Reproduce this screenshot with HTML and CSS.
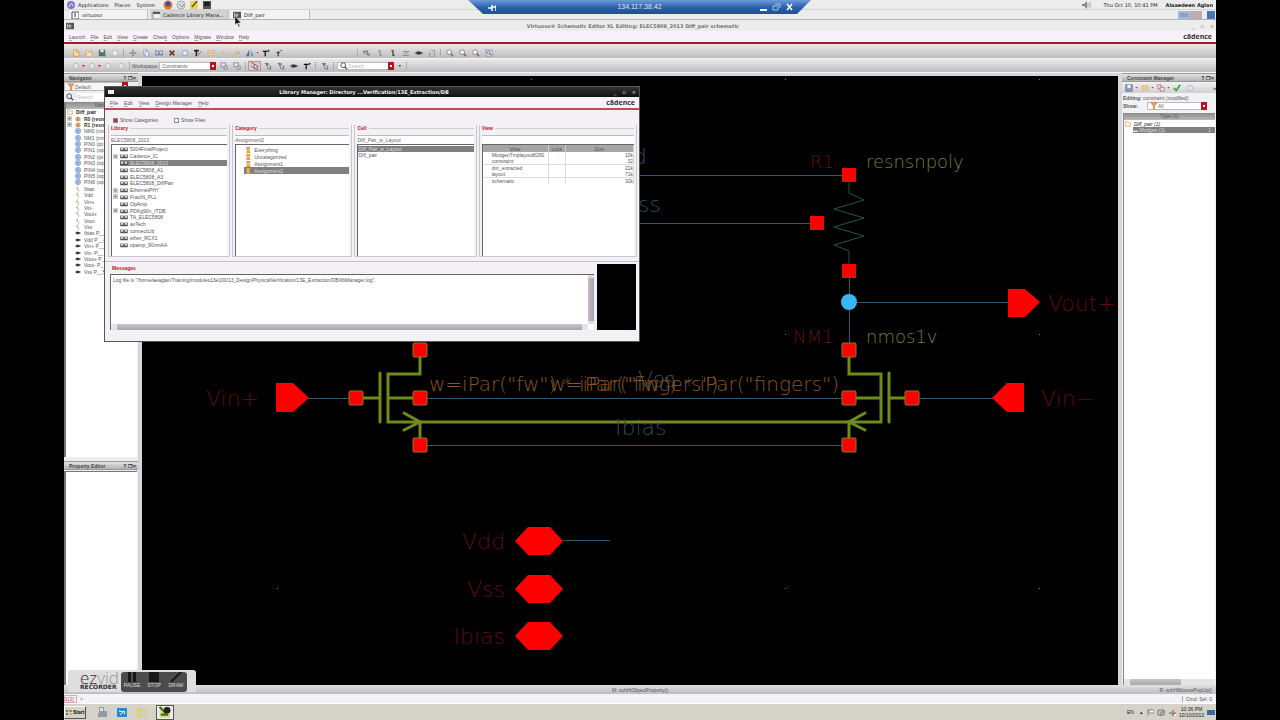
FILE: index.html
```html
<!DOCTYPE html>
<html lang="en">
<head>
    <meta charset="utf-8">
    <title>Virtuoso Schematic Editor</title>
    <link rel="stylesheet" href="styles.css">
</head>
<body>
    <!-- icon sheet -->
    <svg class="sheet" aria-hidden="true">
        <symbol id="i-new" viewBox="0 0 10 10"><path d="M2 1h4l3 3v5H2z" fill="#f7dca6" stroke="#d9964a"/><path d="M6 1v3h3" fill="none" stroke="#d9964a"/></symbol>
        <symbol id="i-open" viewBox="0 0 10 10"><path d="M1 9V2h3l1 1h4v2" fill="#fbe3c0" stroke="#dca064"/><path d="M1 9l2-4h7L8 9z" fill="#fdf0d8" stroke="#dca064"/></symbol>
        <symbol id="i-save" viewBox="0 0 10 10"><path d="M1 1h8v8H1z" fill="#53705c"/><path d="M3 1h4v3H3z" fill="#e6ece8"/><path d="M6 6l4 0-2 4z" fill="#2b9a47"/></symbol>
        <symbol id="i-page" viewBox="0 0 10 10"><path d="M2 2h6v6H2z" fill="#eee" stroke="#bbb"/></symbol>
        <symbol id="i-move" viewBox="0 0 10 10"><path d="M5 1v8M1 5h8M4 2l1-1 1 1M4 8l1 1 1-1M2 4L1 5l1 1M8 4l1 1-1 1" fill="none" stroke="#67788f"/></symbol>
        <symbol id="i-copy" viewBox="0 0 10 10"><path d="M2 1h4v6H2z" fill="#eef" stroke="#8f9bb0"/><path d="M4 3h4v6H4z" fill="#f6f6ff" stroke="#8f9bb0"/></symbol>
        <symbol id="i-book" viewBox="0 0 10 10"><path d="M0 2h4l1 1 1-1h4v6H0z" fill="#7188b8"/><path d="M1 3h3v3H1zM6 3h3v3H6z" fill="#d4dcf0"/></symbol>
        <symbol id="i-x" viewBox="0 0 10 10"><path d="M2 2l6 6M8 2L2 8" stroke="#743a30" stroke-width="2"/></symbol>
        <symbol id="i-ring" viewBox="0 0 10 10"><circle cx="5" cy="5" r="3.5" fill="#dfe8fa" stroke="#7b93cc"/></symbol>
        <symbol id="i-dim" viewBox="0 0 10 10"><circle cx="5" cy="5" r="3.5" fill="#e4e4ea" stroke="#b3b3bb"/></symbol>
        <symbol id="i-text" viewBox="0 0 10 10"><path d="M0 2h6M3 2v7" stroke="#222" stroke-width="2" fill="none"/><path d="M5 8l4-5" stroke="#c98a3c" stroke-width="1.5"/></symbol>
        <symbol id="i-tan" viewBox="0 0 10 10"><path d="M1 2h8v2H1zM1 6h8v2H1z" fill="#f6dcb4" stroke="#d8a25c" stroke-width=".7"/></symbol>
        <symbol id="i-undo" viewBox="0 0 10 10"><path d="M4 2L2 5l3 1M2 5c4-2 6 0 5 3" fill="none" stroke="#dfb788"/></symbol>
        <symbol id="i-redo" viewBox="0 0 10 10"><path d="M6 2l2 3-3 1M8 5C4 3 2 5 3 8" fill="none" stroke="#dc9a4c"/></symbol>
        <symbol id="i-tri" viewBox="0 0 10 10"><path d="M4 1v8H0z" fill="#4c6a98"/><path d="M6 1v8h4z" fill="#7f97bd"/></symbol>
        <symbol id="i-big" viewBox="0 0 10 10"><path d="M1 3h6M4 3v6" stroke="#111" stroke-width="1.6" fill="none"/><path d="M8 1v3M7 2h3" stroke="#444"/></symbol>
        <symbol id="i-small" viewBox="0 0 10 10"><path d="M2 4h4M4 4v5" stroke="#222" stroke-width="1.3" fill="none"/><path d="M6 2h3" stroke="#555"/></symbol>
        <symbol id="i-net" viewBox="0 0 10 10"><path d="M0 3h5v4h3M0 5h3" fill="none" stroke="#555"/><circle cx="5" cy="3" r="1.4" fill="#4a5"/><path d="M6 5h3v4H6z" fill="#999"/></symbol>
        <symbol id="i-wire" viewBox="0 0 10 10"><path d="M3 2h2v6h2" fill="none" stroke="#6b6b6b"/></symbol>
        <symbol id="i-wide" viewBox="0 0 10 10"><path d="M3 2h2v6h2" fill="none" stroke="#5b3b2b" stroke-width="1.6"/></symbol>
        <symbol id="i-label" viewBox="0 0 10 10"><path d="M1 8h8M1 3h8M3 5h4" stroke="#857b6b"/></symbol>
        <symbol id="i-pin" viewBox="0 0 10 10"><path d="M0 5h10" stroke="#333"/><path d="M2 3h4l3 2-3 2H2z" fill="#333"/></symbol>
        <symbol id="i-note" viewBox="0 0 10 10"><path d="M3 2h5v7H2V4" fill="#ddd" stroke="#888"/><path d="M3 6h4" stroke="#888"/></symbol>
        <symbol id="i-zoom" viewBox="0 0 10 10"><circle cx="4" cy="4" r="3" fill="#f5f7fa" stroke="#777"/><path d="M6 6l3 3" stroke="#a5502f" stroke-width="1.6"/></symbol>
        <symbol id="i-fit" viewBox="0 0 10 10"><path d="M1 1h8v8H1z" fill="#dfe3ee" stroke="#6f7893" stroke-dasharray="2 1"/><circle cx="4.500" cy="4.500" r="2" fill="none" stroke="#55607c"/><path d="M6 6l2 2" stroke="#333"/></symbol>
        <symbol id="i-win" viewBox="0 0 10 10"><path d="M1 1h6v5H1z" fill="#dde2ea" stroke="#7d8794"/><path d="M5 5h4v4H5z" fill="#c8ced8" stroke="#7d8794"/></symbol>
        <symbol id="i-arrow" viewBox="0 0 10 10"><path d="M1 2h5M3 1v4" stroke="#666" fill="none"/><path d="M4 3l5 3-2 .6L8.500 9 7 9.300 6 7.400 4.500 8z" fill="#fff" stroke="#333" stroke-width=".7"/></symbol>
        <symbol id="i-pick" viewBox="0 0 10 10"><path d="M0 0l9 6M0 5l6 4" stroke="#c0323c"/><path d="M4 3l5 3-2 .6L8.500 9 7 9.300 6 7.400 4.500 8z" fill="#fff" stroke="#333" stroke-width=".7"/></symbol>
        <symbol id="i-funnel" viewBox="0 0 10 10"><path d="M1 1h8L6 5v4H4V5z" fill="#e0a565" stroke="#b77b3e" stroke-width=".6"/></symbol>
        <symbol id="i-lens" viewBox="0 0 10 10"><circle cx="4" cy="4" r="3" fill="none" stroke="#333"/><path d="M6 6l3 3" stroke="#333" stroke-width="1.500"/></symbol>
        <symbol id="i-lib" viewBox="0 0 10 8"><path d="M0 2h4l1 1 1-1h4v5H0z" fill="#555"/><path d="M1 2h3v3H1zM6 2h3v3H6z" fill="#d8d8d8"/></symbol>
        <symbol id="i-cat" viewBox="0 0 10 10"><path d="M2 0h7v2H8v6h1v2H2V8h1V5H2V3h1V2H2z" fill="#dca04a"/><path d="M4 3h2v4H4z" fill="#f2cf8c"/></symbol>
        <symbol id="i-fold" viewBox="0 0 10 10"><path d="M1 9V1h3l1 2h4v6z" fill="#fff3dc" stroke="#d29b55"/></symbol>
        <symbol id="i-res" viewBox="0 0 10 10"><path d="M1 2l4-1 4 1v6L5 9 1 8z" fill="#d9a878"/><path d="M5 3v6" stroke="#a7683a"/></symbol>
        <symbol id="i-inst" viewBox="0 0 10 10"><circle cx="5" cy="5" r="4.500" fill="#b4c6ee" stroke="#7690cc"/><path d="M3 3h4v4H3z" fill="#8ba4db"/></symbol>
        <symbol id="i-sig" viewBox="0 0 10 10"><path d="M4 0v6h2v4M1 4h3" fill="none" stroke="#98a06c"/></symbol>
        <symbol id="i-term" viewBox="0 0 10 10"><path d="M0 5h10" stroke="#444"/><path d="M2 3h4l3 2-3 2H2z" fill="#333"/></symbol>
        <symbol id="i-app" viewBox="0 0 10 10"><path d="M0 1h10v8H0z" fill="#555"/><path d="M2 2v6M2 5h5M5 3v5" stroke="#ddd" fill="none"/></symbol>
        <symbol id="i-check" viewBox="0 0 10 10"><path d="M1 5l3 3 5-7" fill="none" stroke="#25a53a" stroke-width="2"/></symbol>
        <symbol id="i-disk" viewBox="0 0 10 10"><path d="M1 1h8v8H1z" fill="#8f9dc0" stroke="#5f6f98"/><path d="M3 1h4v4H3z" fill="#f0f3fa"/></symbol>
        <symbol id="i-cube" viewBox="0 0 10 10"><path d="M0 1h5v5H0z" fill="#ecd5dc" stroke="#a86f80"/><path d="M4 4h5v5H4z" fill="#f3e4e8" stroke="#a86f80"/></symbol>
    </svg>

    <main class="screen">
        <header class="panel">
            <svg class="icon big"><circle cx="5" cy="5" r="4" fill="#8274cf"/><path d="M3 7c1-4 4-4 4-1" stroke="#fff" fill="none"/></svg>
            <nav class="panel-menu"><a href="#">Applications</a><a href="#">Places</a><a href="#">System</a></nav>
            <div class="launchers">
                <svg class="icon big"><circle cx="5" cy="5" r="4.500" fill="#e07a2c"/><circle cx="5" cy="4" r="2.500" fill="#3b4fa0"/></svg>
                <svg class="icon big"><circle cx="5" cy="5" r="4" fill="#ddd" stroke="#aaa"/><path d="M3 4l3 3 2-3" fill="none" stroke="#888"/></svg>
                <svg class="icon big"><path d="M1 1h8v8H1z" fill="#e6d554"/><path d="M3 7l5-6" stroke="#665b2a" stroke-width="1.500"/></svg>
                <svg class="icon big"><path d="M1 1h8v8H1z" fill="#555"/><path d="M2 2h6v4H2z" fill="#222"/></svg>
            </div>
            <svg class="icon big speaker"><path d="M1 4h2l3-3v8L3 6H1z" fill="#888"/><path d="M7 3v4M9 2v6" stroke="#aaa"/></svg>
            <span class="clock">Thu Oct 10, 10:41 PM</span>
            <b>Alaaedeen Aglan</b>
        </header>

        <div class="windows">
            <button class="task"><svg class="icon"><path d="M1 1h7v7H1z" fill="#fff" stroke="#555"/><path d="M4 2v4" stroke="#333"/></svg>virtuoso</button>
            <button class="task active"><svg class="icon"><path d="M1 1h8v7H1z" fill="#eee" stroke="#999"/><path d="M1 2h8" stroke="#555" stroke-width="2"/></svg>Cadence Library Mana...</button>
            <button class="task"><svg class="icon"><use href="#i-app"/></svg>Diff_pair</button>
            <div class="pager"><span class="desk one"></span><span class="desk two"></span></div>
            <span class="desk three"></span>
        </div>

        <div class="titlebar">
            <svg class="icon"><use href="#i-app"/></svg>
            <h1>Virtuoso® Schematic Editor XL Editing: ELEC5808_2013 Diff_pair schematic</h1>
            <span class="wm"><i>_</i><i>▫</i><i>×</i></span>
        </div>
        <div class="menubar">
            <nav><a href="#"><u>L</u>aunch</a><a href="#"><u>F</u>ile</a><a href="#"><u>E</u>dit</a><a href="#"><u>V</u>iew</a><a href="#"><u>C</u>reate</a><a href="#">Chec<u>k</u></a><a href="#">O<u>p</u>tions</a><a href="#"><u>M</u>igrate</a><a href="#"><u>W</u>indow</a><a href="#"><u>H</u>elp</a></nav>
            <span class="brand">cādence</span>
        </div>

        <div class="toolbar">
            <button class="tool" aria-label="New"><svg class="icon"><use href="#i-new"/></svg></button>
            <button class="tool" aria-label="Open"><svg class="icon"><use href="#i-open"/></svg></button>
            <button class="tool" aria-label="Save"><svg class="icon"><use href="#i-save"/></svg></button>
            <button class="tool" aria-label="Print"><svg class="icon"><use href="#i-page"/></svg></button>
            <span class="grip"></span>
            <button class="tool" aria-label="Move"><svg class="icon"><use href="#i-move"/></svg></button>
            <button class="tool" aria-label="Copy"><svg class="icon"><use href="#i-copy"/></svg></button>
            <button class="tool" aria-label="Stretch"><svg class="icon"><use href="#i-book"/></svg></button>
            <button class="tool" aria-label="Delete"><svg class="icon"><use href="#i-x"/></svg></button>
            <button class="tool" aria-label="Repeat"><svg class="icon"><use href="#i-ring"/></svg></button>
            <button class="tool" aria-label="Text"><svg class="icon"><use href="#i-text"/></svg></button>
            <button class="tool" aria-label="Properties"><svg class="icon"><use href="#i-tan"/></svg></button>
            <button class="tool" aria-label="Undo"><svg class="icon"><use href="#i-undo"/></svg></button>
            <button class="tool" aria-label="Redo"><svg class="icon"><use href="#i-redo"/></svg></button>
            <button class="tool" aria-label="Flip"><svg class="icon"><use href="#i-tri"/></svg></button>
            <span class="drop"></span>
            <button class="tool" aria-label="Larger"><svg class="icon"><use href="#i-big"/></svg></button>
            <button class="tool" aria-label="Smaller"><svg class="icon"><use href="#i-small"/></svg></button>
            <span class="grip far"></span>
            <button class="tool" aria-label="Instance"><svg class="icon"><use href="#i-net"/></svg></button>
            <button class="tool" aria-label="Wire"><svg class="icon"><use href="#i-wire"/></svg></button>
            <button class="tool" aria-label="Wide wire"><svg class="icon"><use href="#i-wide"/></svg></button>
            <button class="tool" aria-label="Wire name"><svg class="icon"><use href="#i-label"/></svg></button>
            <button class="tool" aria-label="Pin"><svg class="icon"><use href="#i-pin"/></svg></button>
            <button class="tool" aria-label="Note"><svg class="icon"><use href="#i-note"/></svg></button>
            <span class="grip"></span>
            <button class="tool" aria-label="Zoom in"><svg class="icon"><use href="#i-zoom"/></svg></button>
            <button class="tool" aria-label="Zoom out"><svg class="icon"><use href="#i-zoom"/></svg></button>
            <button class="tool" aria-label="Zoom area"><svg class="icon"><use href="#i-zoom"/></svg></button>
            <button class="tool" aria-label="Zoom fit"><svg class="icon"><use href="#i-fit"/></svg></button>
        </div>
        <div class="toolbar second">
            <button class="tool" aria-label="Back"><svg class="icon"><use href="#i-dim"/></svg></button><span class="drop"></span>
            <button class="tool" aria-label="Forward"><svg class="icon"><use href="#i-dim"/></svg></button><span class="drop"></span>
            <button class="tool" aria-label="Up"><svg class="icon"><use href="#i-dim"/></svg></button>
            <button class="tool" aria-label="Top"><svg class="icon"><use href="#i-dim"/></svg></button>
            <span class="grip"></span>
            <label for="workspace">Workspace:</label>
            <span class="combo"><select id="workspace"><option>Constraints</option></select></span>
            <button class="tool" aria-label="Save workspace"><svg class="icon"><use href="#i-win"/></svg></button>
            <button class="tool" aria-label="Delete workspace"><svg class="icon"><use href="#i-win"/></svg></button>
            <span class="grip"></span>
            <button class="tool on" aria-label="Select"><svg class="icon"><use href="#i-pick"/></svg></button>
            <button class="tool" aria-label="Select wires"><svg class="icon"><use href="#i-arrow"/></svg></button>
            <button class="tool" aria-label="Select nets"><svg class="icon"><use href="#i-arrow"/></svg></button>
            <button class="tool" aria-label="Select pins"><svg class="icon"><use href="#i-pin"/></svg></button>
            <button class="tool" aria-label="Select text"><svg class="icon"><use href="#i-big"/></svg></button>
            <span class="grip"></span>
            <button class="tool" aria-label="Partial select"><svg class="icon"><use href="#i-arrow"/></svg></button>
            <span class="grip"></span>
            <label class="combo find"><svg class="icon"><use href="#i-lens"/></svg><input type="text" placeholder="Search" aria-label="Search"></label>
            <span class="drop wide"></span>
            <span class="grip"></span>
        </div>

        <div class="workspace">
            <aside class="left">
                <div class="dock-title"><h2>Navigator</h2><span>? ❐ ×</span></div>
                <label class="combo flat"><svg class="icon"><use href="#i-funnel"/></svg><select aria-label="Filter"><option>Default</option></select></label>
                <label class="search"><svg class="icon"><use href="#i-lens"/></svg><input type="text" placeholder="Search" aria-label="Search objects"></label>
                <section class="navlist">
                    <div class="head">Name</div>
                    <ul class="objects">
                        <li class="root"><svg class="icon"><use href="#i-fold"/></svg>Diff_pair</li>
                        <li class="strong"><svg class="icon"><use href="#i-res"/></svg>R0 (resn</li>
                        <li class="strong"><svg class="icon"><use href="#i-res"/></svg>R1 (resn</li>
                        <li><svg class="icon"><use href="#i-inst"/></svg>NM0 (nm</li>
                        <li><svg class="icon"><use href="#i-inst"/></svg>NM1 (nm</li>
                        <li><svg class="icon"><use href="#i-inst"/></svg>PIN0 (ipi</li>
                        <li><svg class="icon"><use href="#i-inst"/></svg>PIN1 (op</li>
                        <li><svg class="icon"><use href="#i-inst"/></svg>PIN2 (ipi</li>
                        <li><svg class="icon"><use href="#i-inst"/></svg>PIN3 (iop</li>
                        <li><svg class="icon"><use href="#i-inst"/></svg>PIN4 (iop</li>
                        <li><svg class="icon"><use href="#i-inst"/></svg>PIN5 (iop</li>
                        <li><svg class="icon"><use href="#i-inst"/></svg>PIN6 (op</li>
                        <li><svg class="icon"><use href="#i-sig"/></svg>Ibias</li>
                        <li><svg class="icon"><use href="#i-sig"/></svg>Vdd</li>
                        <li><svg class="icon"><use href="#i-sig"/></svg>Vin+</li>
                        <li><svg class="icon"><use href="#i-sig"/></svg>Vin-</li>
                        <li><svg class="icon"><use href="#i-sig"/></svg>Vout+</li>
                        <li><svg class="icon"><use href="#i-sig"/></svg>Vout-</li>
                        <li><svg class="icon"><use href="#i-sig"/></svg>Vss</li>
                        <li><svg class="icon"><use href="#i-term"/></svg>Ibias P__</li>
                        <li><svg class="icon"><use href="#i-term"/></svg>Vdd P__4</li>
                        <li><svg class="icon"><use href="#i-term"/></svg>Vin+ P__</li>
                        <li><svg class="icon"><use href="#i-term"/></svg>Vin- P__</li>
                        <li><svg class="icon"><use href="#i-term"/></svg>Vout+ P_</li>
                        <li><svg class="icon"><use href="#i-term"/></svg>Vout- P_</li>
                        <li><svg class="icon"><use href="#i-term"/></svg>Vss P__5</li>
                    </ul>
                </section>
                <div class="dock-title"><h2>Property Editor</h2><span>? ❐ ×</span></div>
                <div class="props"></div>
            </aside>

            <!-- schematic, drawn in screen units -->
            <svg class="canvas" viewBox="142 76 976 609">
                <g fill="#777">
                    <path d="M531 79h1v1h-1zM785 79h1v1h-1zM1039 79h1v1h-1zM785 334h1v1h-1zM1039 334h1v1h-1zM277 588h1v1h-1zM785 588h1v1h-1zM1039 588h1v1h-1z"/>
                </g>
                <g class="net">
                    <path d="M600 175.500h249M600 223.500h217M849.500 276v69M857 302.500h152M308 398.500h48M420 398.500h429M912 398.500h82M420 445.500h429M563 540.500h47"/>
                </g>
                <path class="res" d="M849 175v18l15 7-30 9 30 9-30 9 30 9-30 9 15 6v20"/>
                <g class="mos">
                    <path d="M420 350v24h-32v48h32v24M380 373v49M356 398h24M388 398h32M404 413l16 9-16 8"/>
                    <path d="M849 350v24h32v48h-32v24M889 373v49M912 398h-23M881 398h-32M865 413l-16 9 16 8"/>
                </g>
                <path class="bias" d="M420 422h429"/>
                <g class="pad">
                    <rect x="413" y="343" width="14" height="14" rx="1"/>
                    <rect x="413" y="391" width="14" height="14" rx="1"/>
                    <rect x="413" y="438" width="14" height="14" rx="1"/>
                    <rect x="349" y="391" width="14" height="14" rx="1"/>
                    <rect x="842" y="343" width="14" height="14" rx="1"/>
                    <rect x="842" y="391" width="14" height="14" rx="1"/>
                    <rect x="842" y="438" width="14" height="14" rx="1"/>
                    <rect x="905" y="391" width="14" height="14" rx="1"/>
                </g>
                <g fill="#f00">
                    <path d="M842 168h14v14h-14zM810 216h14v14h-14zM842 264h14v14h-14z"/>
                    <path d="M276 383h17l16 15-16 14h-17zM1024 383h-17l-15 15 15 14h17zM1008 289h17l15 13-15 15h-17z"/>
                    <path d="M515 541l13-14h22l13 14-13 14h-22zM515 589l13-14h22l13 14-13 14h-22zM515 636l13-14h22l13 14-13 14h-22z"/>
                </g>
                <circle cx="849" cy="302" r="8" fill="#38b6f6"/>
                <g class="pinname">
                    <text x="206" y="406">Vin+</text>
                    <text x="1041" y="406">Vin−</text>
                    <text x="1048" y="311">Vout+</text>
                    <text x="505" y="549" class="end">Vdd</text>
                    <text x="505" y="597" class="end">Vss</text>
                    <text x="505" y="644" class="end">Ibias</text>
                </g>
                <g class="netname">
                    <text x="647" y="164" class="end">d</text>
                    <text x="661" y="212" class="end">ss</text>
                    <text x="638" y="387">Vss</text>
                    <text x="615" y="435">Ibias</text>
                </g>
                <g class="instname">
                    <text x="810" y="168">R1</text>
                    <text x="793" y="343">NM1</text>
                </g>
                <g class="cellname">
                    <text x="866" y="168">resnsnpoly</text>
                    <text x="866" y="343">nmos1v</text>
                </g>
                <g class="param">
                    <text x="429" y="391">w=iPar("fw") * iPar("fingers")</text>
                    <text x="839" y="391" class="end">w=iPar("fw") * iPar("fingers")</text>
                </g>
            </svg>

            <aside class="right">
                <div class="dock-title"><h2>Constraint Manager</h2><span>? ❐ ×</span></div>
                <div class="cm-tools">
                    <button class="tool" aria-label="Save"><svg class="icon"><use href="#i-disk"/></svg></button><span class="drop"></span>
                    <button class="tool" aria-label="View"><svg class="icon"><use href="#i-tan"/></svg></button><span class="drop"></span>
                    <button class="tool" aria-label="Create"><svg class="icon"><use href="#i-cube"/></svg></button><span class="drop"></span>
                    <button class="tool" aria-label="Check"><svg class="icon"><use href="#i-check"/></svg></button>
                    <button class="tool" aria-label="Refresh"><svg class="icon"><use href="#i-dim"/></svg></button>
                    <span class="more">»</span>
                </div>
                <p class="editing"><b>Editing:</b> constraint (modified)</p>
                <div class="show"><label for="show">Show:</label><span class="combo"><svg class="icon"><use href="#i-funnel"/></svg><select id="show"><option>All</option></select></span></div>
                <section class="cmlist">
                    <div class="head">Type (1)</div>
                    <div class="row"><svg class="icon"><use href="#i-fold"/></svg><i>Diff_pair (1)</i></div>
                    <div class="row picked"><span>▬ Modgen (1)</span><span>1</span></div>
                    <div class="hscroll"></div>
                </section>
            </aside>
        </div>

        <div class="hints"><span>M: schHiObjectProperty()</span><span class="r">R: schHiMousePopUp()</span></div>
        <div class="cmd"><span class="count">1(2)</span><span class="prompt">&gt;</span><span class="sel">Cmd: Sel: 0</span></div>

        <footer class="taskbar">
            <button class="start"><svg class="icon"><path d="M1 2h2v2H1z" fill="#d8562d"/><path d="M4 2h3v2H4z" fill="#71a83c"/><path d="M1 5h2v2H1z" fill="#3f72c4"/><path d="M4 5h3v2H4z" fill="#e6b62e"/></svg>Start</button>
            <svg class="launch" viewBox="0 0 12 12"><path d="M3 1h5v4h3v6H2V7h1z" fill="#8e9aa5"/><path d="M4 2h3v3H4z" fill="#d9e3ea"/></svg>
            <svg class="launch" viewBox="0 0 12 12"><path d="M1 2h10v9H1z" fill="#2d88cf"/><path d="M3 5l4 1-3 3M7 5l2 1-1 2" stroke="#fff" fill="none"/></svg>
            <svg class="launch" viewBox="0 0 12 12"><path d="M1 2h4l1 1h5v8H1z" fill="#eccb6c"/><path d="M4 5h6v4H4z" fill="#b4d6ea"/></svg>
            <svg class="launch open" viewBox="0 0 12 12"><path d="M1 1h10v10H1z" fill="#d9e08a"/><path d="M1 1l6 6M2 8h7" stroke="#3c6f28" stroke-width="2"/><circle cx="8" cy="4" r="3" fill="#222"/></svg>
            <div class="tray">
                <span>EN</span><span class="up">▴</span>
                <svg class="icon"><path d="M2 1v8M3 2h5v3H3z" fill="#fff" stroke="#888"/></svg>
                <svg class="icon"><path d="M1 2h6v5H1zM4 4h5v5H4z" fill="#ccc" stroke="#777"/></svg>
                <svg class="icon"><path d="M1 4h2l3-3v8L3 6H1z" fill="#999"/><circle cx="7" cy="7" r="2" fill="#fff" stroke="#c22"/></svg>
                <time>10:36 PM<br>10/10/2013</time>
                <svg class="icon"><path d="M0 2h8v5H0z" fill="#3d68a8"/></svg>
            </div>
        </footer>

        <!-- library manager window -->
        <section class="dialog">
            <div class="dialog-title"><svg class="icon"><path d="M0 1h6v4H0z" fill="#eee"/></svg><h2>Library Manager: Directory ...Verification/13E_Extraction/DB</h2><span class="wm"><i>_</i><i>▫</i><i>×</i></span></div>
            <div class="menubar inner">
                <nav><a href="#"><u>F</u>ile</a><a href="#"><u>E</u>dit</a><a href="#"><u>V</u>iew</a><a href="#"><u>D</u>esign Manager</a><a href="#"><u>H</u>elp</a></nav>
                <span class="brand">cādence</span>
            </div>
            <div class="options">
                <label><input type="checkbox" checked>Show Categories</label>
                <label><input type="checkbox">Show Files</label>
            </div>
            <div class="columns">
                <div class="group">
                    <h3><label for="lib">Library</label></h3>
                    <input type="text" id="lib" value="ELEC5808_2013">
                    <div class="box">
                        <ul class="tree libs">
                            <li><svg class="icon"><use href="#i-lib"/></svg><span>5004FinalProject</span></li>
                            <li class="plus"><svg class="icon"><use href="#i-lib"/></svg><span>Cadence_IC</span></li>
                            <li class="picked"><svg class="icon"><use href="#i-lib"/></svg><span>ELEC5808_2013</span></li>
                            <li><svg class="icon"><use href="#i-lib"/></svg><span>ELEC5808_A1</span></li>
                            <li><svg class="icon"><use href="#i-lib"/></svg><span>ELEC5808_A3</span></li>
                            <li><svg class="icon"><use href="#i-lib"/></svg><span>ELEC5808_DiffPair</span></li>
                            <li class="plus"><svg class="icon"><use href="#i-lib"/></svg><span>EthernetPHY</span></li>
                            <li class="plus"><svg class="icon"><use href="#i-lib"/></svg><span>FractN_PLL</span></li>
                            <li><svg class="icon"><use href="#i-lib"/></svg><span>OpAmp</span></li>
                            <li class="plus"><svg class="icon"><use href="#i-lib"/></svg><span>PDKg90n_ITDB</span></li>
                            <li><svg class="icon"><use href="#i-lib"/></svg><span>TA_ELEC5808</span></li>
                            <li><svg class="icon"><use href="#i-lib"/></svg><span>avTech</span></li>
                            <li><svg class="icon"><use href="#i-lib"/></svg><span>connectLib</span></li>
                            <li><svg class="icon"><use href="#i-lib"/></svg><span>ether_RCX1</span></li>
                            <li><svg class="icon"><use href="#i-lib"/></svg><span>opamp_90nmAA</span></li>
                        </ul>
                    </div>
                </div>
                <div class="group">
                    <h3><label for="cat">Category</label></h3>
                    <input type="text" id="cat" value="Assignment2">
                    <div class="box">
                        <ul class="tree cats">
                            <li><svg class="icon"><use href="#i-cat"/></svg><span>Everything</span></li>
                            <li><svg class="icon"><use href="#i-cat"/></svg><span>Uncategorized</span></li>
                            <li><svg class="icon"><use href="#i-cat"/></svg><span>Assignment1</span></li>
                            <li class="picked"><svg class="icon"><use href="#i-cat"/></svg><span>Assignment2</span></li>
                        </ul>
                    </div>
                </div>
                <div class="group">
                    <h3><label for="cell">Cell</label></h3>
                    <input type="text" id="cell" value="Diff_Pair_w_Layout">
                    <div class="box">
                        <ul class="cells">
                            <li class="picked">Diff_Pair_w_Layout</li>
                            <li>Diff_pair</li>
                        </ul>
                    </div>
                </div>
                <div class="group">
                    <h3><label for="view">View</label></h3>
                    <input type="text" id="view">
                    <div class="box">
                        <table class="views">
                            <thead><tr><th class="v">View</th><th class="l">Lock</th><th>Size</th></tr></thead>
                            <tbody>
                                <tr><td>ModgenTmplayout8290</td><td></td><td>10k</td></tr>
                                <tr><td>constraint</td><td></td><td>32</td></tr>
                                <tr><td>dnr_extracted</td><td></td><td>22k</td></tr>
                                <tr><td>layout</td><td></td><td>71k</td></tr>
                                <tr><td>schematic</td><td></td><td>32k</td></tr>
                            </tbody>
                        </table>
                    </div>
                </div>
            </div>
            <div class="bottom">
                <div class="messages">
                    <h3><label for="log">Messages</label></h3>
                    <div class="log">
                        <textarea id="log" readonly>Log file is "/home/aeaglan/Training/modules13e100/13_DesignPhysicalVerification/13E_Extraction/DB/libManager.log".</textarea>
                        <div class="vscroll"></div>
                        <div class="hscroll"></div>
                    </div>
                </div>
                <div class="preview"></div>
            </div>
        </section>

        <!-- remote desktop bar -->
        <div class="rdp">
            <svg class="icon"><path d="M0 5h4M4 2v6M4 4h4M8 2v6" stroke="#fff" stroke-width="1.500" fill="none"/></svg>
            <span>134.117.38.42</span>
            <svg class="rdp-buttons" viewBox="0 0 34 10"><path d="M1 8h7" stroke="#fff" stroke-width="2"/><path d="M16 2h5v4M14 4h5v4h-5z" fill="none" stroke="#a9c4ec"/><path d="M28 2l5 6M33 2l-5 6" stroke="#fff" stroke-width="1.500"/></svg>
        </div>

        <!-- screen recorder bar -->
        <div class="ezvid">
            <div class="logo"><p>ez<span>vid</span></p><small>RECORDER</small></div>
            <div class="controls">
                <button><svg viewBox="0 0 12 10"><path d="M2 0h3v10H2zM7 0h3v10H7z" fill="#171717"/></svg>PAUSE</button>
                <button><svg viewBox="0 0 12 10"><path d="M1 0h10v10H1z" fill="#171717"/></svg>STOP</button>
                <button><svg viewBox="0 0 12 10"><path d="M1 10L11 0" stroke="#171717" stroke-width="2"/></svg>DRAW</button>
            </div>
        </div>

        <svg class="cursor" viewBox="0 0 7 11"><path d="M0 0v9l2-2 2 4 1-1-2-3h3z" fill="#111" stroke="#fff" stroke-width=".4"/></svg>
    </main>
</body>
</html>
```
FILE: styles.css
```css
* {
    box-sizing: border-box;
}
body {
    margin: 0;
    background: #000;
    font: 5px/6px "Liberation Sans", Arial, sans-serif;
    color: #555;
}
h1, h2, h3, p, ul {
    margin: 0;
    padding: 0;
    font-size: inherit;
    list-style: none;
}
a {
    color: inherit;
    text-decoration: none;
}
button, input, select, textarea {
    margin: 0;
    padding: 0;
    border: 0;
    border-radius: 0;
    background: none;
    font: inherit;
    color: inherit;
    appearance: none;
    outline: 0;
    min-width: 0;
}
input::placeholder {
    color: #bbb;
}
.sheet {
    position: absolute;
    width: 0;
    height: 0;
}
.icon {
    width: 8px;
    height: 8px;
    flex: none;
}

.screen {
    position: relative;
    display: flex;
    flex-direction: column;
    height: 100vh;
    margin: 0 5%;
    background: #ececec;
    overflow: hidden;
}

/* gnome panel */
.panel, .windows, .titlebar {
    display: flex;
    align-items: center;
    flex: none;
    font-family: "DejaVu Sans", sans-serif;
    color: #222;
}
.panel {
    height: 10px;
    padding: 0 3px 0 2px;
    border-bottom: 1px solid #d4d4d4;
}
.icon.big {
    width: 10px;
    height: 10px;
}
.panel-menu {
    display: flex;
    gap: 6px;
    margin: 0 8px 0 2px;
}
.launchers {
    display: flex;
    gap: 3px;
}
.speaker {
    margin-left: auto;
}
.clock {
    margin: 0 8px 0 12px;
}
.windows {
    height: 10px;
    padding: 0 1px 0 5px;
    gap: 2px;
    border-bottom: 1px solid #b4b4b4;
}
.task {
    display: flex;
    align-items: center;
    gap: 3px;
    width: 79px;
    height: 9px;
    padding: 0 2px;
    background: #f3f3f3;
    border-right: 1px solid #bbb;
    white-space: nowrap;
}
.task.active {
    background: #d2d2d2;
    border-radius: 2px;
}
.pager {
    display: flex;
    margin-left: auto;
}
.desk {
    width: 12px;
    height: 8px;
    background: #b9b0ae;
}
.desk.one {
    background: #8ea0c0;
    border: 2px solid #a5b8dc;
}
.desk.three {
    width: 8px;
    margin-left: 3px;
    background: #4775b6;
}

/* editor window */
.titlebar {
    height: 11px;
    padding: 0 2px;
    color: #777;
}
.titlebar h1 {
    flex: 1;
    text-align: center;
}
.wm {
    display: flex;
    gap: 6px;
}
.wm i {
    font-style: normal;
}
.menubar {
    display: flex;
    align-items: center;
    justify-content: space-between;
    flex: none;
    height: 13px;
    padding: 0 4px 0 5px;
    background: #f7f1fa;
    border-bottom: 2px solid #a31924;
}
.menubar nav {
    display: flex;
    gap: 5px;
}
.menubar.inner nav {
    gap: 6px;
}
.menubar u {
    text-decoration-color: #aaa;
}
.brand {
    font: bold 7px/8px "Open Sans", sans-serif;
    color: #333;
}
.toolbar {
    display: flex;
    align-items: center;
    flex: none;
    height: 15px;
    padding: 3px 4px 0 5px;
    background: linear-gradient(#ebebeb, #bcbcbe);
    border-bottom: 1px solid #f5f5f5;
}
.toolbar.second {
    height: 14px;
    padding-top: 1px;
}
.tool {
    display: flex;
    align-items: center;
    justify-content: center;
    width: 13px;
    height: 10px;
    flex: none;
}
.tool.on {
    background: #dcc9cc;
    border: 1px solid #a99;
}
.grip {
    width: 1px;
    height: 8px;
    margin: 0 2px;
    flex: none;
    background: #aaa;
}
.grip.far {
    margin-left: 72px;
}
.drop {
    width: 3px;
    height: 2px;
    flex: none;
    background: #b02a34;
    clip-path: polygon(0 0, 100% 0, 50% 100%);
}
.drop.wide {
    margin: 0 3px;
}
.combo {
    position: relative;
    display: flex;
    align-items: center;
    width: 57px;
    height: 8px;
    padding: 0 7px 0 2px;
    margin: 0 1px;
    background: #fff;
    border: 1px solid #bbb;
    color: #666;
}
.combo::after {
    content: "";
    position: absolute;
    right: -1px;
    top: -1px;
    width: 6px;
    height: 8px;
    background: radial-gradient(circle, #fff 1px, #b8101c 1px);
}
.combo select, .combo input {
    flex: 1;
    height: 6px;
}

.workspace {
    display: flex;
    flex: 1;
    min-height: 0;
    background: #d6d6dc;
}
.left {
    display: flex;
    flex-direction: column;
    width: 74px;
    flex: none;
    background: #ededf0;
}
.dock-title {
    display: flex;
    align-items: center;
    justify-content: space-between;
    flex: none;
    height: 9px;
    padding: 0 2px 0 5px;
    background: linear-gradient(#e2e2e2, #b2b2b4);
    border: solid #999;
    border-width: 1px 0;
    color: #444;
}
.dock-title span {
    font-weight: bold;
    color: #222;
}
.combo.flat {
    width: auto;
    height: 9px;
    margin: 0 10px 0 0;
    background: #f6f6f6;
}
.search {
    display: flex;
    align-items: center;
    gap: 3px;
    height: 11px;
    padding: 0 2px;
}
.search input {
    width: 50px;
    height: 8px;
    background: #fff;
}
.navlist {
    flex: 1;
    min-height: 0;
    margin: 0 1px 4px 0;
    background: #fff;
    border-left: 2px solid #777;
}
.head {
    height: 7px;
    background: linear-gradient(#8c8c8c, #b9b9b9);
    text-align: center;
}
.objects {
    display: grid;
    grid-auto-rows: 1fr;
    height: 166px;
}
.objects li {
    display: flex;
    align-items: center;
    gap: 2px;
    padding-left: 8px;
    white-space: nowrap;
    overflow: hidden;
    min-height: 0;
}
.objects .icon, .row .icon, .tree .icon {
    height: 6px;
}
.objects .root {
    padding-left: 0;
    font-weight: bold;
    color: #222;
}
.objects .strong {
    font-weight: bold;
    color: #333;
}
.objects .strong::before, .tree .plus::before {
    content: "+";
    width: 5px;
    height: 5px;
    margin-left: -7px;
    background: #ccc;
    font: 5px/5px "Liberation Sans", sans-serif;
    text-align: center;
    color: #555;
}
.props {
    flex: 0 0 214px;
    margin: 1px 1px 0 0;
    background: #fff;
    border: solid #777;
    border-width: 1px 0 0 2px;
}

/* schematic */
.canvas {
    flex: 1;
    min-width: 0;
    margin: 3px 4px 0;
    background: #000;
    font-family: "DejaVu Sans Light", "DejaVu Sans", sans-serif;
    font-weight: 200;
}
.net {
    fill: none;
    stroke: #31586f;
}
.res {
    fill: none;
    stroke: #23573f;
}
.mos, .bias {
    fill: none;
    stroke: #6d8c1b;
    stroke-width: 3;
    stroke-linecap: round;
}
.bias {
    stroke: #7b851f;
}
.pad {
    fill: #f00;
    stroke: #8a7a1a;
}
.pinname {
    font-size: 22px;
    fill: #600a0a;
}
.netname {
    font-size: 22px;
    fill: #2f4a5e;
}
.instname {
    font-size: 18px;
    fill: #651016;
}
.cellname {
    font-size: 18px;
    fill: #75803c;
}
.param {
    font-size: 20px;
    fill: #8a5526;
}
.end {
    text-anchor: end;
}

/* constraint manager */
.right {
    display: flex;
    flex-direction: column;
    width: 94px;
    flex: none;
    background: #f3f1f5;
}
.cm-tools {
    display: flex;
    align-items: center;
    height: 11px;
    background: linear-gradient(#f2f2f2, #d0d0d2);
}
.more {
    margin-left: auto;
    color: #222;
}
.editing {
    padding: 2px 1px 1px;
    white-space: nowrap;
}
.show {
    display: flex;
    align-items: center;
    height: 8px;
    padding-left: 1px;
    font-weight: bold;
}
.show .combo {
    flex: 1;
    margin: 0 9px;
    font-weight: normal;
}
.cmlist {
    display: flex;
    flex-direction: column;
    flex: 1;
    margin: 3px 1px 0;
    background: #fff;
    border-left: 1px solid #888;
}
.row {
    display: flex;
    align-items: center;
    gap: 2px;
    height: 7px;
    color: #222;
}
.row.picked {
    justify-content: space-between;
    height: 6px;
    margin-left: 9px;
    padding-right: 4px;
}
.picked {
    background: #808080;
    color: #ddd;
}
.hscroll {
    height: 6px;
    background: linear-gradient(#c8c4ca, #a9a6ac);
    border: solid #e4e4e4;
    border-width: 0 6px;
}
.cmlist .hscroll {
    margin-top: auto;
    border-right-width: 34px;
}

.hints {
    display: flex;
    align-items: center;
    justify-content: center;
    position: relative;
    flex: none;
    height: 9px;
    background: linear-gradient(#e0e0e0, #bdbdc2);
}
.hints .r {
    position: absolute;
    right: 4px;
}
.cmd {
    display: flex;
    align-items: center;
    flex: none;
    height: 9px;
    background: #f4f1f7;
}
.count {
    width: 13px;
    color: #c2454f;
    border: 1px solid #dba5aa;
}
.prompt {
    margin-left: 3px;
}
.sel {
    margin-left: auto;
    padding: 0 4px 0 3px;
    border-left: 1px solid #aaa;
}
.taskbar {
    display: flex;
    align-items: center;
    gap: 8px;
    flex: none;
    height: 17px;
    background: #d5d2c9;
    border-top: 1px solid #fff;
}
.start {
    display: flex;
    align-items: center;
    width: 22px;
    height: 13px;
    margin-right: 2px;
    border: 1px solid #666;
    border-color: #fff #555 #555 #fff;
    font-weight: bold;
    color: #111;
}
.launch {
    width: 12px;
    height: 12px;
}
.launch.open {
    width: 18px;
    height: 15px;
    background: #eee;
    border: 1px solid #555;
}
.tray {
    display: flex;
    align-items: center;
    gap: 3px;
    margin-left: auto;
    padding-right: 1px;
    color: #222;
}
.tray .up {
    margin-left: 3px;
}
.tray time {
    text-align: center;
}

/* library manager */
.dialog {
    position: absolute;
    left: 40px;
    top: 86px;
    width: 536px;
    background: #f3f1f6;
    border: 1px solid #555;
    padding-bottom: 11px;
}
.dialog-title {
    display: flex;
    align-items: center;
    height: 10px;
    padding: 0 3px;
    background: linear-gradient(#333, #111);
    font-family: "DejaVu Sans", sans-serif;
    color: #eee;
}
.dialog-title .icon {
    width: 6px;
    height: 6px;
}
.dialog-title h2 {
    flex: 1;
    text-align: center;
}
.menubar.inner {
    border-bottom-color: #c44a54;
}
.options {
    display: flex;
    gap: 16px;
    padding: 7px 8px 2px;
}
.options label {
    display: flex;
    align-items: center;
    gap: 2px;
}
.options input {
    width: 5px;
    height: 5px;
    background: #fff;
    border: 1px solid #888;
}
.options input:checked {
    background: #c22a34;
}
.columns {
    display: grid;
    grid-template-columns: 122fr 120fr 122fr 158fr;
    gap: 2px;
    padding: 0 2px 4px 3px;
    border-bottom: 1px solid #c2c0c6;
}
.group {
    display: flex;
    flex-direction: column;
    min-width: 0;
    padding: 0 2px;
    border: solid #c9c7cd;
    border-width: 0 1px 1px 1px;
}
h3 {
    display: flex;
    align-items: center;
    gap: 2px;
    color: #c3121f;
}
.group h3::after {
    content: "";
    flex: 1;
    height: 1px;
    background: #d0ced4;
}
.group > input {
    width: 100%;
    height: 9px;
    margin-top: 4px;
    background: #fdfdfd;
    border-top: 1px solid #bbb;
    color: #666;
}
.box {
    height: 112px;
    background: #fff;
    border: solid #666;
    border-width: 1px 0 0 1px;
}
.tree {
    display: grid;
    grid-auto-rows: 1fr;
    margin: 1px 0 0 1px;
}
.tree.libs {
    height: 102px;
}
.tree.cats {
    height: 28px;
}
.tree li {
    display: flex;
    align-items: center;
    gap: 2px;
    min-height: 0;
    margin-left: 7px;
    white-space: nowrap;
}
.cells {
    padding-top: 1px;
}
.cells li {
    height: 6px;
}
.views {
    width: 100%;
    border-spacing: 0;
    table-layout: fixed;
}
.views th {
    height: 7px;
    padding: 0;
    background: #a6a6a6;
    border-right: 1px solid #ccc;
    font-weight: normal;
}
.views .v {
    width: 66px;
}
.views .l {
    width: 17px;
}
.views td {
    padding: 0;
    line-height: 6px;
    border: solid #ddd;
    border-width: 0 1px 0 0;
    white-space: nowrap;
}
.views tr:nth-child(even) td {
    border-width: 0 1px 1px 0;
}
.views td:first-child {
    padding-left: 9px;
}
.views td:last-child {
    text-align: right;
}
.bottom {
    display: flex;
    gap: 3px;
    padding: 2px 3px 0 3px;
}
.messages {
    flex: 1;
}
.messages h3 {
    padding: 1px 4px 3px;
}
.log {
    display: grid;
    grid-template-columns: 1fr 6px;
    grid-template-rows: 49px 6px;
    margin-left: 2px;
    background: #fff;
    border: solid #666;
    border-width: 1px 0 0 1px;
}
.log textarea {
    padding: 2px;
    resize: none;
    overflow: hidden;
}
.vscroll {
    background: linear-gradient(90deg, #c3bbc4, #aaa2ac);
    border: solid #ddd;
    border-width: 3px 0;
}
.preview {
    width: 39px;
    background: #000;
}

/* overlays */
.rdp {
    position: absolute;
    top: 0;
    left: 404px;
    width: 343px;
    height: 14px;
    display: flex;
    align-items: center;
    justify-content: space-between;
    padding: 0 18px 0 20px;
    background: linear-gradient(#6c9bd8, #2c62ac 50%, #1f4f96);
    clip-path: polygon(0 0, 100% 0, 329px 100%, 15px 100%);
    font: 7px/10px "Liberation Sans", sans-serif;
    color: #dfe9f8;
}
.rdp span {
    padding-left: 24px;
}
.rdp-buttons {
    width: 34px;
    height: 10px;
}
.ezvid {
    position: absolute;
    left: 4px;
    bottom: 28px;
    display: flex;
    gap: 3px;
    width: 128px;
    height: 22px;
    padding: 2px 9px 0 12px;
    background: #dedede;
    border-radius: 3px 3px 0 0;
}
.logo {
    flex: 1;
    min-width: 0;
    color: #333;
}
.logo p {
    font: 300 17px/12px "Open Sans", sans-serif;
}
.logo p span {
    color: #999;
}
.logo small {
    display: block;
    font: bold 6px/6px "DejaVu Sans", sans-serif;
}
.controls {
    display: flex;
    flex: none;
    width: 66px;
    background: #4c4c4c;
    border-radius: 3px;
}
.controls button {
    display: flex;
    flex-direction: column;
    align-items: center;
    flex: 1;
    color: #ddd;
}
.controls svg {
    width: 12px;
    height: 10px;
}
.cursor {
    position: absolute;
    left: 171px;
    top: 16px;
    width: 7px;
    height: 11px;
}
```
